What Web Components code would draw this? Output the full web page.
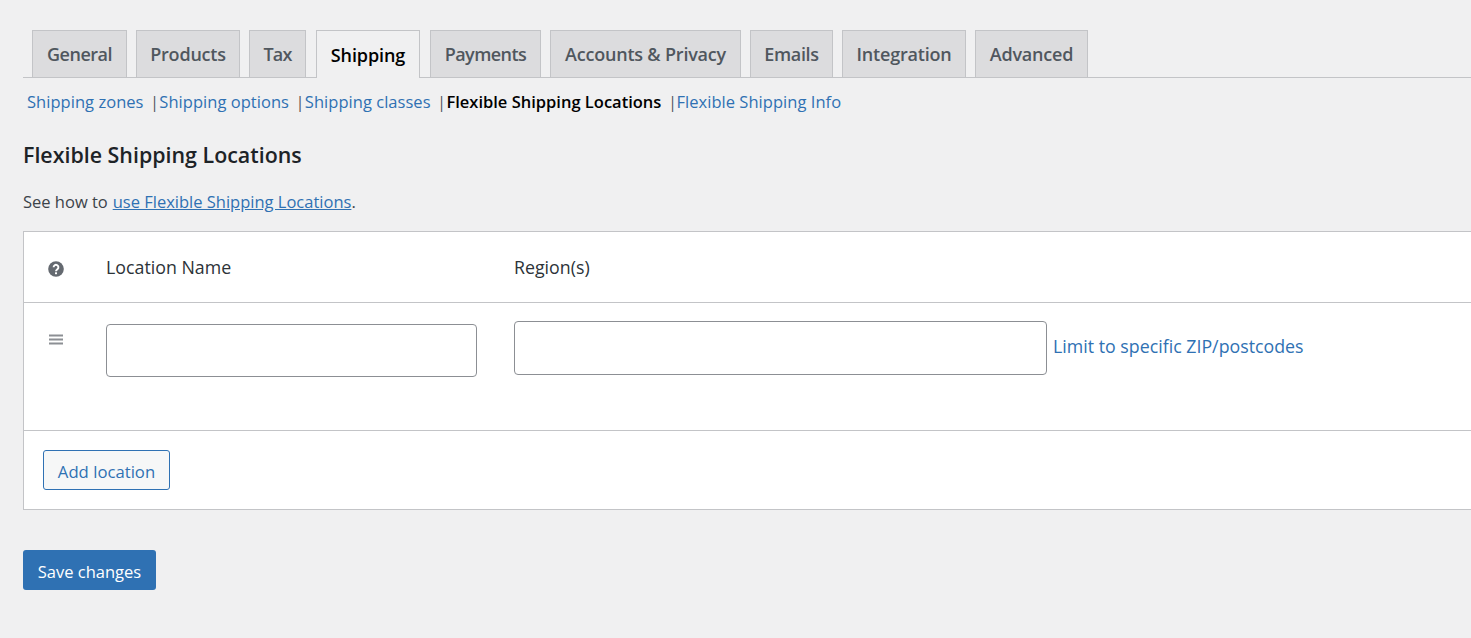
<!DOCTYPE html>
<html lang="en">
<head>
<meta charset="utf-8">
<title>Flexible Shipping Locations</title>
<style>
  html, body { margin: 0; height: 100%; overflow: hidden; }
  body { background: #f0f0f1; font-family: "Open Sans", "Noto Sans", sans-serif; color: #3c434a; }
</style>
</head>
<body>
<settings-page>
  <nav-tabs>
    <nav-tab style="width:95px;letter-spacing:-0.5px">General</nav-tab>
    <nav-tab style="width:104px">Products</nav-tab>
    <nav-tab style="width:57px;letter-spacing:-0.8px">Tax</nav-tab>
    <nav-tab active style="width:104px;margin-left:1px;letter-spacing:-0.1px">Shipping</nav-tab>
    <nav-tab style="width:111px;margin-left:1px;letter-spacing:-0.55px">Payments</nav-tab>
    <nav-tab style="width:191px">Accounts &amp; Privacy</nav-tab>
    <nav-tab style="width:83px;letter-spacing:-0.35px">Emails</nav-tab>
    <nav-tab style="width:124px">Integration</nav-tab>
    <nav-tab style="width:113px">Advanced</nav-tab>
  </nav-tabs>
  <sub-nav>
    <sub-link>Shipping zones</sub-link>
    <sub-link>Shipping options</sub-link>
    <sub-link>Shipping classes</sub-link>
    <sub-link current>Flexible Shipping Locations</sub-link>
    <sub-link last>Flexible Shipping Info</sub-link>
  </sub-nav>
  <page-intro></page-intro>
  <locations-table></locations-table>
  <save-button>Save changes</save-button>
</settings-page>

<script>
class SettingsPage extends HTMLElement {
    constructor() {
        super();
        this.attachShadow({ mode: 'open' });
        this.shadowRoot.innerHTML = `
            <style>
                :host { display: block; padding: 30px 0 0 23px; }
            </style>
            <slot></slot>
        `;
    }
}

class NavTabs extends HTMLElement {
    constructor() {
        super();
        this.attachShadow({ mode: 'open' });
        this.shadowRoot.innerHTML = `
            <style>
                :host {
                    display: flex;
                    gap: 9px;
                    padding-left: 9px;
                    height: 47px;
                    border-bottom: 1px solid #c3c4c7;
                }
            </style>
            <slot></slot>
        `;
    }
}

class NavTab extends HTMLElement {
    constructor() {
        super();
        this.attachShadow({ mode: 'open' });
        this.shadowRoot.innerHTML = `
            <style>
                :host {
                    display: flex;
                    align-items: center;
                    justify-content: center;
                    box-sizing: border-box;
                    height: 47px;
                    background: #dcdcde;
                    border: 1px solid #c3c4c7;
                    border-bottom: 0;
                    color: #50575e;
                    font-size: 18px;
                    font-weight: 600;
                    letter-spacing: -0.2px;
                    white-space: nowrap;
                }
                :host([active]) {
                    background: #f0f0f1;
                    color: #000;
                    height: 48px;
                }
            </style>
            <slot></slot>
        `;
    }
}

class SubNav extends HTMLElement {
    constructor() {
        super();
        this.attachShadow({ mode: 'open' });
        this.shadowRoot.innerHTML = `
            <style>
                :host {
                    display: flex;
                    padding: 13px 0 0 4px;
                    height: 22px;
                    line-height: 22px;
                    font-size: 16.5px;
                    white-space: nowrap;
                }
            </style>
            <slot></slot>
        `;
    }
}

class SubLink extends HTMLElement {
    constructor() {
        super();
        this.attachShadow({ mode: 'open' });
        this.shadowRoot.innerHTML = `
            <style>
                :host { display: block; color: #2f71b3; letter-spacing: 0.04px; }
                :host([current]) { color: #000; font-weight: 600; letter-spacing: 0; }
                .sep { color: #50575e; margin: 0 0.2px 0 6.5px; font-weight: 400; }
                :host([current]) .sep { margin-right: -0.5px; }
                :host([last]) .sep { display: none; }
            </style>
            <slot></slot><span class="sep">|</span>
        `;
    }
}

class PageIntro extends HTMLElement {
    constructor() {
        super();
        this.attachShadow({ mode: 'open' });
        this.shadowRoot.innerHTML = `
            <style>
                :host { display: block; }
                h2 {
                    margin: 28px 0 0;
                    font-size: 21.4px;
                    line-height: 28px;
                    font-weight: 600;
                    color: #1d2327;
                }
                p {
                    margin: 22px 0 0;
                    font-size: 16.5px;
                    line-height: 22px;
                }
                a { color: #2f71b3; text-decoration: underline; margin-left: 0.6px; }
            </style>
            <h2>Flexible Shipping Locations</h2>
            <p>See how to <a>use Flexible Shipping Locations</a>.</p>
        `;
    }
}

class LocationsTable extends HTMLElement {
    constructor() {
        super();
        this.attachShadow({ mode: 'open' });
        this.shadowRoot.innerHTML = `
            <style>
                :host {
                    display: block;
                    margin-top: 18px;
                    background: #fff;
                    border: 1px solid #c3c4c7;
                    border-right: 0;
                    font-size: 17.8px;
                    color: #2c3338;
                }
                .row { display: grid; grid-template-columns: 82px 408px 1fr; }
                .head { height: 70px; align-items: center; border-bottom: 1px solid #c3c4c7; }
                .body { height: 127px; border-bottom: 1px solid #c3c4c7; }
                .icon { padding-left: 24px; display: flex; }
                .head .icon { padding-top: 4px; }
                .handle { padding-top: 31px; }
                .name-cell { padding-top: 21px; }
                .region-cell { padding-top: 18px; display: flex; align-items: flex-start; }
                .field {
                    display: block;
                    box-sizing: border-box;
                    background: #fff;
                    border: 1px solid #8c8f94;
                    border-radius: 4px;
                }
                .name-cell .field { width: 371px; height: 53px; }
                .region-cell .field { width: 533px; height: 54px; }
                .limit { margin: 14px 0 0 6px; line-height: 22px; color: #2f71b3; white-space: nowrap; }
                .foot { height: 78px; padding: 19px 0 0 19px; box-sizing: border-box; }
                .add {
                    display: inline-block;
                    box-sizing: border-box;
                    height: 40px;
                    width: 127px;
                    padding: 2px 0 0;
                    font: inherit;
                    font-size: 16.7px;
                    color: #2f71b3;
                    background: #f6f7f7;
                    border: 1px solid #2f71b3;
                    border-radius: 3px;
                }
            </style>
            <div class="row head">
                <div class="icon">
                    <svg width="16" height="16" viewBox="0 0 16 16">
                        <circle cx="8" cy="8" r="7.8" fill="#646970"/>
                        <path d="M5.6 6.2a2.4 2.4 0 1 1 4 1.8c-.8.7-1.6 1-1.6 2.2" fill="none" stroke="#fff" stroke-width="1.9"/>
                        <rect x="7" y="11.3" width="2" height="1.9" fill="#fff"/>
                    </svg>
                </div>
                <div>Location Name</div>
                <div>Region(s)</div>
            </div>
            <div class="row body">
                <div class="icon handle">
                    <svg width="16" height="12" viewBox="0 0 16 12">
                        <path d="M1 1.5h14M1 5.5h14M1 9.5h14" stroke="#8c8f94" stroke-width="1.8"/>
                    </svg>
                </div>
                <div class="name-cell"><div class="field"></div></div>
                <div class="region-cell"><div class="field"></div><span class="limit">Limit to specific ZIP/postcodes</span></div>
            </div>
            <div class="foot"><button class="add">Add location</button></div>
        `;
    }
}

class SaveButton extends HTMLElement {
    constructor() {
        super();
        this.attachShadow({ mode: 'open' });
        this.shadowRoot.innerHTML = `
            <style>
                :host {
                    display: flex;
                    align-items: center;
                    justify-content: center;
                    box-sizing: border-box;
                    margin-top: 40px;
                    padding-top: 2px;
                    width: 133px;
                    height: 40px;
                    background: #2f71b3;
                    border-radius: 3px;
                    color: #fff;
                    font-size: 16.5px;
                }
            </style>
            <slot></slot>
        `;
    }
}

customElements.define('settings-page', SettingsPage);
customElements.define('nav-tabs', NavTabs);
customElements.define('nav-tab', NavTab);
customElements.define('sub-nav', SubNav);
customElements.define('sub-link', SubLink);
customElements.define('page-intro', PageIntro);
customElements.define('locations-table', LocationsTable);
customElements.define('save-button', SaveButton);
</script>
</body>
</html>
